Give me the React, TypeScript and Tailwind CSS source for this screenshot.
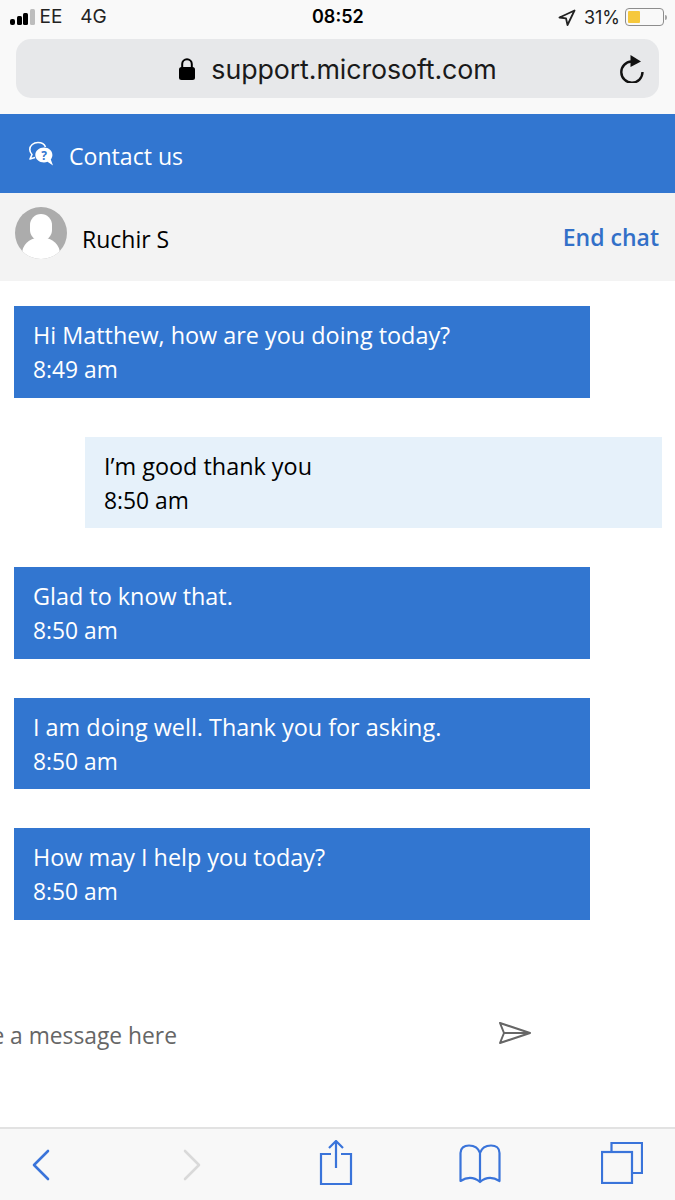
const FONT_UI = "font-['Open_Sans','Noto_Sans',sans-serif]";
const FONT_SYS = "font-['Inter','Roboto',sans-serif]";

type Message = {
  text: string;
  time: string;
  mine?: boolean;
};

const messages: Message[] = [
  { text: "Hi Matthew, how are you doing today?", time: "8:49 am" },
  { text: "I’m good thank you", time: "8:50 am", mine: true },
  { text: "Glad to know that.", time: "8:50 am" },
  { text: "I am doing well. Thank you for asking.", time: "8:50 am" },
  { text: "How may I help you today?", time: "8:50 am" },
];

function StatusBar() {
  return (
    <div className={`relative flex h-[39px] items-center justify-between pb-[5px] pl-[10px] pr-[8px] text-[#222] ${FONT_SYS}`}>
      <div className="flex items-center text-[19px]">
        <div className="flex items-end gap-[1.5px]">
          <span className="h-[6px] w-[5px] rounded-[2px] bg-black" />
          <span className="h-[9px] w-[5px] rounded-[1.5px] bg-black" />
          <span className="h-[12px] w-[5px] rounded-[1.5px] bg-black" />
          <span className="h-[16px] w-[5px] rounded-[1.5px] bg-[#bdbdbd]" />
        </div>
        <span className="ml-[5px]">EE</span>
        <span className="ml-[18px]">4G</span>
      </div>
      <span className="absolute left-[312px] top-[6px] text-[18px] font-semibold leading-[22px] text-black">08:52</span>
      <div className="flex items-center text-[18px]">
        <svg width="18" height="17" viewBox="0 0 18 17" fill="none" stroke="#222" strokeWidth="1.800" strokeLinejoin="round">
          <path d="M16.500 1.500 1.500 8.500l6.500.8 1.500 6.700z" />
        </svg>
        <span className="ml-[8px]">31%</span>
        <div className="ml-[5px] flex h-[18px] w-[39px] items-center rounded-[4px] border border-[#8d8d8d] p-[2px]">
          <div className="h-full w-[12px] rounded-[1px] bg-[#f6c83c]" />
        </div>
        <span className="ml-[1px] h-[5px] w-[2px] rounded-r-sm bg-[#a5a5a5]" />
      </div>
    </div>
  );
}

function UrlBar() {
  return (
    <div className="flex h-[75px] items-start bg-[#f9f9f9] px-[16px]">
      <div className={`relative flex h-[59px] w-full items-center justify-center rounded-[15px] bg-[#e7e8ea] text-black ${FONT_SYS}`}>
        <div className="flex items-center">
          <svg width="18" height="24" viewBox="0 0 18 24" className="mr-[15px]">
            <path d="M4.200 11V7a4.800 4.800 0 0 1 9.600 0v4" fill="none" stroke="#000" strokeWidth="2" />
            <rect x="1" y="10" width="16" height="13" rx="2.500" fill="#000" />
          </svg>
          <span className="mt-[1px] text-[26.8px] leading-[32px] tracking-[-0.1px] text-[#1a1a1a]">support.microsoft.com</span>
        </div>
        <svg width="26" height="28" viewBox="0 0 26 28" className="absolute right-[14px] top-[16px]" fill="none">
          <path d="M12.500 6.500a10.600 10.600 0 1 0 11 10.600" stroke="#111" strokeWidth="2.400" />
          <path d="M11.500 0 22 6.500 11.500 12z" fill="#111" />
        </svg>
      </div>
    </div>
  );
}

function Avatar() {
  return (
    <div className="relative h-[52px] w-[52px] overflow-hidden rounded-full bg-[#acacac]">
      <div className="absolute left-[15px] top-[7px] h-[27px] w-[22px] rounded-full bg-white" />
      <div className="absolute left-[7px] top-[31px] h-[32px] w-[38px] rounded-t-[16px] bg-white" />
    </div>
  );
}

function Bubble({ message }: { message: Message }) {
  return (
    <div
      className={
        message.mine
          ? "ml-[85px] mr-[13px] flex h-[91.5px] flex-col justify-center bg-[#e6f1fa] pl-[19px] pt-[2px] text-black"
          : "ml-[14px] mr-[85px] flex h-[91.5px] flex-col justify-center bg-[#3276d0] pl-[19px] pt-[2px] text-white"
      }
    >
      <p className="text-[23.4px] leading-[34px]">{message.text}</p>
      <p className="mt-[1px] text-[22.8px] leading-[34px]">{message.time}</p>
    </div>
  );
}

function Toolbar() {
  const blue = "#3a74da";
  return (
    <div className="h-[73px] border-t-2 border-[#e2e2e2] bg-[#f8f8f8]">
      <div className="flex items-start pl-[32px] pt-[10px]">
        <svg width="18" height="32" viewBox="0 0 18 32" className="mt-[10px]" fill="none" stroke={blue} strokeWidth="2.600" strokeLinecap="round" strokeLinejoin="round">
          <path d="M16 2 2 16l14 14" />
        </svg>
        <svg width="18" height="32" viewBox="0 0 18 32" className="ml-[133px] mt-[10px]" fill="none" stroke="#d9d9d9" strokeWidth="2.600" strokeLinecap="round" strokeLinejoin="round">
          <path d="M2 2l14 14L2 30" />
        </svg>
        <svg width="34" height="46" viewBox="0 0 34 46" className="ml-[118px] mt-[1px]" fill="none" stroke={blue} strokeWidth="2.200">
          <path d="M12 14H2v30h30V14H22" />
          <path d="M17 28V2M10 8l7-7 7 7" />
        </svg>
        <svg width="42" height="40" viewBox="0 0 42 40" className="ml-[106px] mt-[5px]" fill="none" stroke={blue} strokeWidth="2.200" strokeLinejoin="round">
          <path d="M21 38V9C19 3 15 1.500 10 1.500 5 1.500 1.500 4 1.500 9v28C8 33 15 33 21 38c6-5 13-5 19.500-1V9c0-5-3.500-7.500-8.500-7.500S23 3 21 9" />
        </svg>
        <svg width="42" height="42" viewBox="0 0 42 42" className="ml-[100px] mt-[3px]" fill="none" stroke={blue} strokeWidth="2.200">
          <rect x="1" y="10" width="30" height="31" />
          <path d="M10.500 10V1H41v30h-10" />
        </svg>
      </div>
    </div>
  );
}

export default function App() {
  return (
    <div className={`flex h-[1200px] w-[675px] flex-col overflow-hidden bg-white ${FONT_UI}`}>
      <div className="bg-[#f9f9f9]">
        <StatusBar />
      </div>
      <UrlBar />

      {/* Contact us header */}
      <div className="flex h-[79px] items-center bg-[#3276d0] pl-[28px] text-white">
        <svg width="26" height="26" viewBox="0 0 26 26" fill="none" className="mt-[1px]">
          <path d="M7 16.500 2 18l2-4.500C2.500 12 1.800 10 1.800 8.500 1.800 4.500 5.500 1.500 10 1.500c3.500 0 6.500 1.800 7.500 4.500" stroke="#fff" strokeWidth="1.600" strokeLinejoin="round" />
          <path d="M16 6.500c-4.800 0-8.700 3.300-8.700 7.500s3.900 7.500 8.700 7.500c1.300 0 2.500-.2 3.500-.7l5.500 3.700-2.200-6c1-1.300 1.600-2.900 1.600-4.500 0-4.200-3.600-7.500-8.400-7.500z" fill="#fff" />
          <text x="16" y="18.500" textAnchor="middle" fontSize="12" fontWeight="700" fill="#3276d0">?</text>
        </svg>
        <span className="ml-[15px] mt-[6px] text-[23.1px]">Contact us</span>
      </div>

      {/* Agent row */}
      <div className="flex h-[88px] items-start justify-between bg-[#f3f3f3] pl-[15px] pr-[16px]">
        <div className="mt-[14px] flex items-center">
          <Avatar />
          <span className="ml-[15px] mt-[12px] text-[23px] text-black">Ruchir S</span>
        </div>
        <span className="mt-[27px] text-[23px] font-semibold leading-[34px] text-[#3270c8]">End chat</span>
      </div>

      {/* Messages */}
      <div className="mt-[25px] flex flex-col gap-[39px]">
        {messages.map((m) => (
          <Bubble key={m.text} message={m} />
        ))}
      </div>

      {/* Message input */}
      <div className="mt-[96.5px] flex h-[40px] items-center">
        <div className="flex w-[177px] justify-end overflow-hidden whitespace-nowrap text-[22.8px] text-[#666]">
          Type a message here
        </div>
        <svg width="34" height="24" viewBox="0 0 34 24" className="ml-[321px] -mt-[6px]" fill="none" stroke="#666" strokeWidth="2" strokeLinejoin="round">
          <path d="M2 2l30 10L2 22l4-10z" />
          <path d="M6 12h26" />
        </svg>
      </div>

      <div className="flex-1" />
      <Toolbar />
    </div>
  );
}
